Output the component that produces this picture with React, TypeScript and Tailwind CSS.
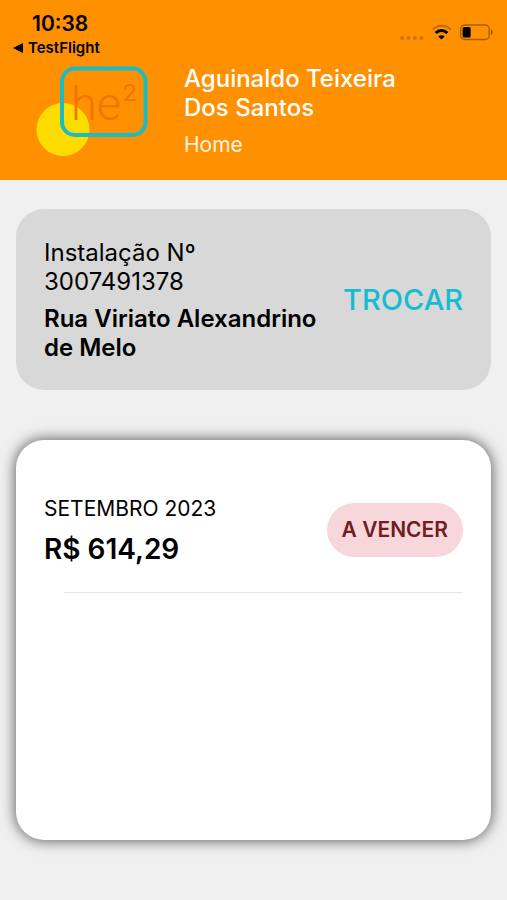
function StatusBar() {
  return (
    <div className="flex items-start justify-between px-3 pt-3 text-black">
      <div>
        <div className="pl-5 text-[21px] leading-6 font-semibold">10:38</div>
        <a href="#testflight" className="flex items-center gap-1 text-[15px] leading-6 font-semibold">
          <svg width="12" height="12" viewBox="0 0 12 12" aria-hidden="true">
            <path d="M1 6 L11 1 V11 Z" fill="currentColor" />
          </svg>
          TestFlight
        </a>
      </div>

      <div className="flex h-10 items-center gap-2">
        <svg width="24" height="16" viewBox="0 0 24 16" className="mt-3" fill="#c97410" aria-hidden="true">
          <circle cx="2.1" cy="8" r="2" />
          <circle cx="8.5" cy="8" r="2" />
          <circle cx="15" cy="8" r="2" />
          <circle cx="21.5" cy="8" r="2" />
        </svg>
        <svg width="20" height="16" viewBox="0 0 20 16" fill="none" aria-label="Wi-Fi">
          <path d="M0.8 5.6 C5.8 0.6 13.8 0.6 18.8 5.6" stroke="#c06c06" strokeWidth="2" />
          <path d="M3.7 9 C7 5.8 12 5.8 15.3 9" stroke="#000" strokeWidth="3" />
          <path d="M9.5 15.6 L6.3 12.5 C8.1 10.9 10.9 10.9 12.7 12.5 Z" fill="#000" />
        </svg>
        <svg width="35" height="17" viewBox="0 0 35 17" fill="none" aria-label="Bateria">
          <rect x="0.7" y="1" width="28.6" height="14.5" rx="4" stroke="#a65e05" strokeWidth="1.4" />
          <rect x="2.6" y="3" width="8" height="10.5" rx="1.5" fill="#000" />
          <path d="M31 5.6 C33 6.4 33 10.1 31 10.9 Z" fill="#8a4e04" />
        </svg>
      </div>
    </div>
  );
}

function Logo() {
  return (
    <svg width="112" height="94" viewBox="0 0 112 94" className="shrink-0" role="img" aria-label="he2">
      <circle cx="27" cy="65.5" r="26.5" fill="#ffdc00" />
      <rect x="26" y="4.5" width="83.5" height="66.5" rx="13" fill="none" stroke="#1cbcc4" strokeWidth="4" />
      <g fill="#ee7600" fontFamily="Roboto, sans-serif" fontWeight="300">
        <text x="35" y="56" fontSize="47">he</text>
        <text x="87" y="37" fontSize="24" fontWeight="400">2</text>
      </g>
    </svg>
  );
}

function Header() {
  return (
    <header className="bg-[#ff9000] pb-4">
      <StatusBar />
      <div className="flex items-start gap-9 px-9 pt-1">
        <Logo />
        <div className="pb-1 text-white">
          <h1 className="text-2xl leading-[29px] font-medium">
            Aguinaldo Teixeira
            <br />
            Dos Santos
          </h1>
          <p className="mt-2 text-[21px] leading-[30px] text-white/90">Home</p>
        </div>
      </div>
    </header>
  );
}

export default function App() {
  return (
    <div className="min-h-screen bg-[#f0f0f0] font-[Inter,sans-serif] text-black">
      <Header />

      <main className="px-4 pt-[29px] pb-14">
        <section className="flex items-center justify-between rounded-[28px] bg-[#d8d8d8] px-7 pt-[29px] pb-7">
          <div>
            <p className="text-2xl leading-[29px]">
              Instalação Nº
              <br />
              3007491378
            </p>
            <p className="mt-2 text-2xl leading-[29px] font-semibold">
              Rua Viriato Alexandrino
              <br />
              de Melo
            </p>
          </div>
          <button type="button" className="text-[29px] font-medium text-[#16bdd0]">
            TROCAR
          </button>
        </section>

        <section className="mt-[50px] min-h-[400px] rounded-[28px] bg-white px-7 pt-[52px] shadow-[0_0_14px_1px_rgba(0,0,0,0.6)]">
          <div className="flex items-center justify-between">
            <div>
              <p className="text-[21px] leading-[34px]">SETEMBRO 2023</p>
              <p className="mt-1 text-[28px] leading-[38px] font-semibold">R$ 614,29</p>
            </div>
            <span className="rounded-full bg-[#f7d7dc] px-[15px] py-3 text-[21px] leading-[30px] font-semibold text-[#721c24]">
              A VENCER
            </span>
          </div>
          <hr className="mt-6 ml-5 border-[#e6e6e6]" />
        </section>
      </main>
    </div>
  );
}
